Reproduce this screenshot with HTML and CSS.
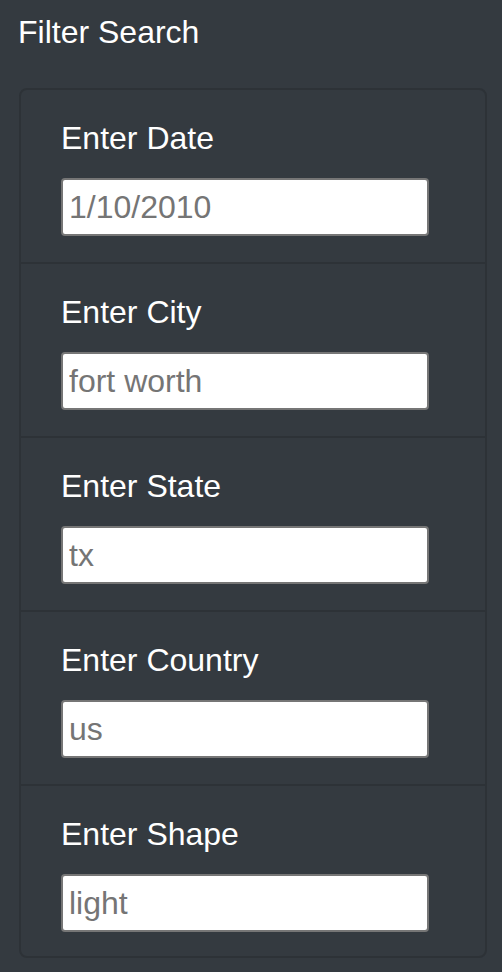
FILE: index.html
```html
<!DOCTYPE html>
<html>
<head>
<meta charset="utf-8">
<link rel="stylesheet" href="styles.css">
</head>
<body>
<div class="panel">
  <h5 class="title">Filter Search</h5>
  <ul class="card">
    <li class="item">
      <label class="label" for="date">Enter Date</label>
      <input class="field" id="date" type="text" placeholder="1/10/2010">
    </li>
    <li class="item">
      <label class="label" for="city">Enter City</label>
      <input class="field" id="city" type="text" placeholder="fort worth">
    </li>
    <li class="item">
      <label class="label" for="state">Enter State</label>
      <input class="field" id="state" type="text" placeholder="tx">
    </li>
    <li class="item">
      <label class="label" for="country">Enter Country</label>
      <input class="field" id="country" type="text" placeholder="us">
    </li>
    <li class="item">
      <label class="label" for="shape">Enter Shape</label>
      <input class="field" id="shape" type="text" placeholder="light">
    </li>
  </ul>
</div>
</body>
</html>
```
FILE: styles.css
```css
html, body {
  margin: 0;
  padding: 0;
  background: #343a40;
  height: 100%;
}
body {
  font-family: "Liberation Sans", Arial, sans-serif;
  color: #fff;
}
.panel {
  padding: 13px 15px 0 18px;
}
.title {
  margin: 0 0 37px 0;
  font-size: 32px;
  line-height: 1.2;
  font-weight: 400;
  color: #fff;
}
.card {
  list-style: none;
  margin: 0 0 0 1px;
  padding: 0;
  border: 2px solid #2d3237;
  border-radius: 8px;
}
.item {
  display: flex;
  flex-direction: column;
  align-items: flex-start;
  padding: 24px 40px 26px;
  border-bottom: 2px solid #2d3237;
}
.item:last-child {
  border-bottom: none;
  padding-bottom: 24px;
}
.label {
  font-size: 32px;
  line-height: 48px;
  margin-bottom: 16px;
  color: #fff;
}
.field {
  box-sizing: border-box;
  width: 368px;
  height: 58px;
  margin: 0;
  padding: 0 6px;
  border: 2px solid #767676;
  border-radius: 4px;
  background: #fff;
  font-family: "Liberation Sans", Arial, sans-serif;
  font-size: 32px;
  color: #333;
  outline: none;
}
.field::placeholder {
  color: #757575;
  opacity: 1;
}
```
